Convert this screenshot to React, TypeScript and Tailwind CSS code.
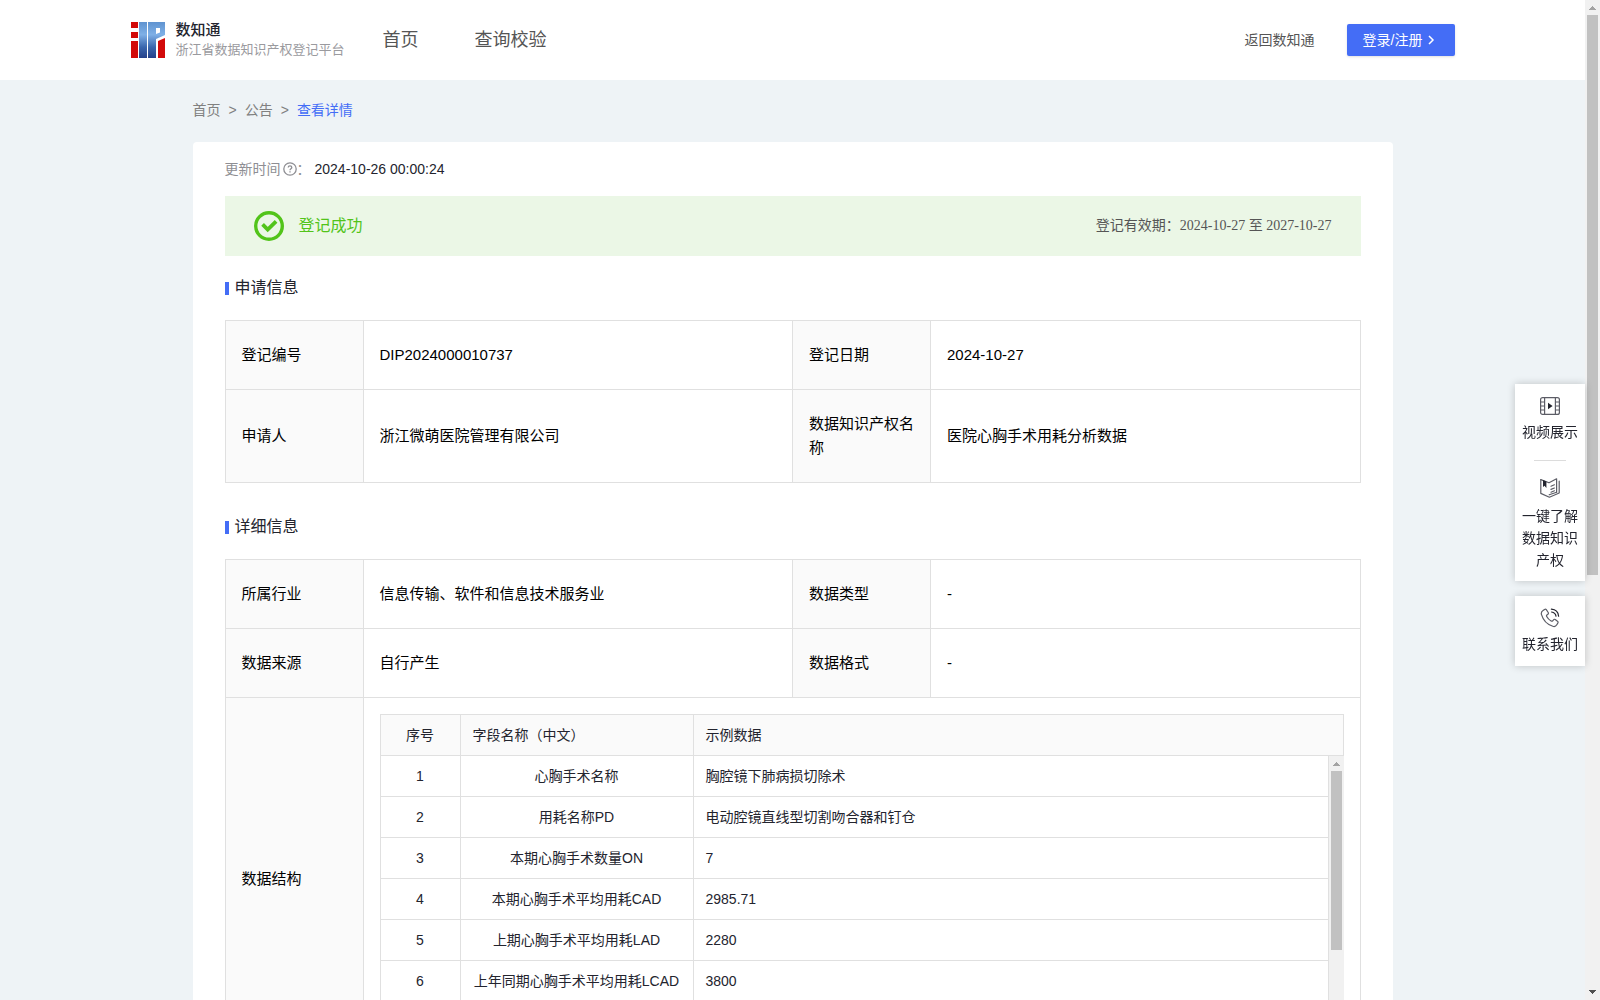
import React from 'react';

interface InfoRow {
  label: string;
  value: string;
}

const applyRows: InfoRow[][] = [
  [{ label: '登记编号', value: 'DIP2024000010737' }, { label: '登记日期', value: '2024-10-27' }],
  [{ label: '申请人', value: '浙江微萌医院管理有限公司' }, { label: '数据知识产权名称', value: '医院心胸手术用耗分析数据' }],
];

const detailRows: InfoRow[][] = [
  [{ label: '所属行业', value: '信息传输、软件和信息技术服务业' }, { label: '数据类型', value: '-' }],
  [{ label: '数据来源', value: '自行产生' }, { label: '数据格式', value: '-' }],
];

const fields = [
  { id: 1, name: '心胸手术名称', sample: '胸腔镜下肺病损切除术' },
  { id: 2, name: '用耗名称PD', sample: '电动腔镜直线型切割吻合器和钉仓' },
  { id: 3, name: '本期心胸手术数量ON', sample: '7' },
  { id: 4, name: '本期心胸手术平均用耗CAD', sample: '2985.71' },
  { id: 5, name: '上期心胸手术平均用耗LAD', sample: '2280' },
  { id: 6, name: '上年同期心胸手术平均用耗LCAD', sample: '3800' },
];

const Logo = () => (
  <svg width="34" height="36" viewBox="0 0 34 36">
    <defs>
      <linearGradient id="logoBlue" x1="0" y1="0" x2="0" y2="36" gradientUnits="userSpaceOnUse">
        <stop offset="0" stopColor="#5f93d0" />
        <stop offset="0.35" stopColor="#7fb0e6" />
        <stop offset="0.7" stopColor="#3a66ad" />
        <stop offset="1" stopColor="#24408a" />
      </linearGradient>
    </defs>
    <path fill="#d20a0a" d="M0 0h7v6H0zM0 10h7v6H0zM0 19h7v17H0zM27 19l7-3v20h-7z" />
    <path fill="url(#logoBlue)" d="M8 0h8v36H8z" />
    <path fill="url(#logoBlue)" fillRule="evenodd" d="M17 0h17v13l-9 4v19h-8zM25 6v6l4-1.500V6z" />
  </svg>
);

const VideoIcon = () => (
  <svg width="20" height="20" viewBox="0 0 20 20" fill="none" stroke="#5c5d66" strokeWidth="1.2">
    <rect x="0.6" y="1.6" width="18.8" height="16.8" rx="2" />
    <path d="M4.6 1.6v16.8M15.4 1.6v16.8M0.6 6h4M0.6 10h4M0.6 14h4M15.4 6h4M15.4 10h4M15.4 14h4" />
    <path d="M8 6.8v6.4l4.6-3.2z" fill="#23242e" stroke="none" />
  </svg>
);

const BookIcon = () => (
  <svg width="20" height="20" viewBox="0 0 20 20" fill="none" stroke="#5c5d66" strokeWidth="1.2" strokeLinejoin="round" strokeLinecap="round">
    <path d="M0.8 1.6 9 4.8l7.6-4v13.4" />
    <path d="M0.8 1.6v13.8l8.600 3.800 9.800-4.200V3.200" />
    <path d="M9.200 16.800l7.400-2.600" />
    <path d="M11 8.200l3.400-1.400M11 11.400l3.400-1.400M11 14.200l3.400-1.400" />
    <path d="M3 2v7l1.500-1.200L6.400 10V3.600z" fill="#23242e" stroke="none" />
  </svg>
);

const PhoneIcon = () => (
  <svg width="20" height="20" viewBox="0 0 20 20" fill="none" stroke="#5c5d66" strokeWidth="1.2" strokeLinecap="round" strokeLinejoin="round">
    <path d="M3 2.6 4.6 1.4c.6-.4 1.3-.3 1.7.3l1.9 2.8c.4.6.3 1.3-.3 1.7l-1 .8c-.5.4-.5 1-.2 1.6 1 1.9 2.500 3.400 4.400 4.400.6.3 1.200.3 1.600-.2l.8-1c.4-.6 1.100-.7 1.700-.3l2.300 1.800c.6.4.8 1.200.3 1.800l-1 1.700c-.8 1.400-2.400 2-4 1.500C7.500 16.700 3.200 12.400 1.500 6.700 1 5.100 1.600 3.500 3 2.600z" />
    <path d="M11.400 1.200c4 .3 6.800 3 7.200 7M11.600 4c2.500.3 4 1.800 4.400 4.200" stroke="#23242e" />
  </svg>
);

const SuccessIcon = () => (
  <svg width="30" height="30" viewBox="0 0 30 30" fill="none" stroke="#52c41a">
    <circle cx="15" cy="15" r="13.3" strokeWidth="3.4" />
    <path d="M8.600 13.400l5.100 5.100 8.400-8.200" strokeWidth="3.800" />
  </svg>
);

const HelpIcon = () => (
  <svg width="14" height="14" viewBox="0 0 14 14" fill="none" stroke="#8e8e93" strokeWidth="1.3">
    <circle cx="7" cy="7" r="6.2" />
    <path d="M5.200 5.600c0-1 .8-1.700 1.800-1.700s1.800.7 1.800 1.600c0 1.200-1.800 1.300-1.800 2.700" />
    <path d="M7 9.200v1.300" />
  </svg>
);

// Scroll track with arrows, the thumb length comes from the caller
const ScrollTrack = ({ thumb, downArrow }: { thumb: string; downArrow?: boolean }) => (
  <div className="w-[15px] shrink-0 bg-[#f1f1f1] flex flex-col items-center" aria-hidden="true">
    <svg className="shrink-0" width="15" height="15" viewBox="0 0 15 15" fill="#a3a3a3" shapeRendering="crispEdges">
      <path d="M4 10h7L7.500 6z" />
    </svg>
    <div className={`w-[11px] bg-[#c1c1c1] ${thumb}`}></div>
    {downArrow && (
      <svg className="shrink-0 mt-auto" width="15" height="15" viewBox="0 0 15 15" fill="#505050" shapeRendering="crispEdges">
        <path d="M4 5h7L7.500 9z" />
      </svg>
    )}
  </div>
);

const SectionTitle = ({ children }: { children: React.ReactNode }) => (
  <h2 className="flex items-center gap-1.5 text-base leading-6 text-[#23242e]">
    <span className="w-1 h-[13px] bg-[#446df6]"></span>
    {children}
  </h2>
);

const InfoTable = ({ rows, children }: { rows: InfoRow[][]; children?: React.ReactNode }) => (
  <table className="w-full table-fixed border-collapse text-[15px] leading-6 text-black">
    <colgroup>
      <col className="w-[138px]" />
      <col />
      <col className="w-[138px]" />
      <col />
    </colgroup>
    <tbody>
      {rows.map((row) => (
        <tr key={row[0].label}>
          {row.map((cell) => (
            <React.Fragment key={cell.label}>
              <th scope="row" className="border border-[#e0e0e0] bg-[#fafafa] px-4 py-[22px] text-left font-normal">{cell.label}</th>
              <td className="border border-[#e0e0e0] px-4 py-[22px]">{cell.value}</td>
            </React.Fragment>
          ))}
        </tr>
      ))}
      {children}
    </tbody>
  </table>
);

const FieldCols = () => (
  <colgroup>
    <col className="w-20" />
    <col className="w-[233px]" />
    <col />
  </colgroup>
);

const FieldTable = () => (
  <div className="border-l border-t border-[#e0e0e0] text-sm leading-6 text-[#23242e]">
    <table className="w-full table-fixed border-separate border-spacing-0 bg-[#fafafa]">
      <FieldCols />
      <thead>
        <tr>
          <th className="border-r border-b border-[#e0e0e0] px-3 py-2 font-normal">序号</th>
          <th className="border-r border-b border-[#e0e0e0] px-3 py-2 text-left font-normal">字段名称（中文）</th>
          <th className="border-r border-b border-[#e0e0e0] px-3 py-2 text-left font-normal">示例数据</th>
        </tr>
      </thead>
    </table>
    <div className="flex h-[287px] overflow-hidden">
      <div className="flex-1 border-r border-[#e0e0e0]">
        <table className="w-full table-fixed border-separate border-spacing-0">
          <FieldCols />
          <tbody>
            {fields.map((f) => (
              <tr key={f.id}>
                <td className="border-r border-b border-[#e0e0e0] px-3 py-2 text-center">{f.id}</td>
                <td className="border-r border-b border-[#e0e0e0] px-3 py-2 text-center">{f.name}</td>
                <td className="border-b border-[#e0e0e0] px-3 py-2">{f.sample}</td>
              </tr>
            ))}
          </tbody>
        </table>
      </div>
      <ScrollTrack thumb="h-[179px]" />
    </div>
  </div>
);

const Header = () => (
  <header className="h-20 bg-white">
    <div className="mx-auto flex h-full max-w-[1324px] items-center">
      <a href="#" className="flex items-center gap-[11px]">
        <Logo />
        <span className="flex flex-col">
          <span className="text-[15px] leading-5 font-medium text-[#23242e]">数知通</span>
          <span className="text-[13px] leading-5 text-[#9a9a9e]">浙江省数据知识产权登记平台</span>
        </span>
      </a>
      <nav className="ml-[38px] flex gap-14 text-lg text-[#555555]">
        <a href="#">首页</a>
        <a href="#">查询校验</a>
      </nav>
      <a href="#" className="ml-auto text-sm text-[#555555]">返回数知通</a>
      <button className="ml-8 flex h-8 w-[108px] items-center gap-1 rounded-[2px] bg-[#446df6] pl-4 text-sm text-white shadow-sm">
        登录/注册
        <svg width="10" height="10" viewBox="0 0 10 10" fill="none" stroke="currentColor" strokeWidth="1.5">
          <path d="M3 1l4 4-4 4" />
        </svg>
      </button>
    </div>
  </header>
);

const SideBar = () => (
  <aside className="fixed right-[15px] top-96 z-10 flex w-[70px] flex-col gap-[15px] text-sm leading-[22px] text-[#23242e]">
    <div className="flex flex-col items-center bg-white pt-3 pb-2.5 shadow-[0_0_8px_rgba(0,0,0,0.2)]">
      <a href="#" className="flex flex-col items-center gap-[5px]">
        <VideoIcon />
        视频展示
      </a>
      <div className="my-[17px] h-px w-8 bg-[#dcdcdc]"></div>
      <a href="#" className="flex flex-col items-center gap-[7px] px-[7px] text-center">
        <BookIcon />
        一键了解数据知识产权
      </a>
    </div>
    <a href="#" className="flex flex-col items-center gap-[5px] bg-white pt-3 pb-[11px] shadow-[0_0_8px_rgba(0,0,0,0.2)]">
      <PhoneIcon />
      联系我们
    </a>
  </aside>
);

export default function App() {
  return (
    <div className="flex h-screen bg-[#eef3f6] font-['Liberation_Sans','Noto_Sans_CJK_SC',sans-serif]">
      <div className="min-w-0 flex-1 overflow-y-auto [scrollbar-width:none]">
        <Header />
        <main className="mx-auto max-w-[1200px]">
          <nav className="flex gap-2 pt-5 pb-[22px] text-sm text-[#808080]">
            <a href="#">首页</a>
            <span>&gt;</span>
            <a href="#">公告</a>
            <span>&gt;</span>
            <a href="#" className="text-[#446df6]">查看详情</a>
          </nav>

          <div className="rounded-t bg-white px-8 pt-[15px] pb-8">
            <p className="flex items-center text-sm leading-6 text-[#8e8e93]">
              更新时间
              <span className="pl-0.5"><HelpIcon /></span>
              ：
              <span className="ml-1 text-[#23242e]">2024-10-26 00:00:24</span>
            </p>

            <div className="mt-[15px] flex h-[60px] items-center bg-[#ebf7e6] px-[29px]">
              <SuccessIcon />
              <span className="ml-[15px] text-base text-[#52c41a]">登记成功</span>
              <span className="ml-auto font-['Liberation_Serif','Noto_Sans_CJK_SC',serif] text-sm text-[#555555]">
                登记有效期：2024-10-27 至 2027-10-27
              </span>
            </div>

            <section className="mt-5">
              <SectionTitle>申请信息</SectionTitle>
              <div className="mt-5">
                <InfoTable rows={applyRows} />
              </div>
            </section>

            <section className="mt-8">
              <SectionTitle>详细信息</SectionTitle>
              <div className="mt-5">
                <InfoTable rows={detailRows}>
                  <tr>
                    <th scope="row" className="border border-[#e0e0e0] bg-[#fafafa] px-4 text-left font-normal">数据结构</th>
                    <td colSpan={3} className="border border-[#e0e0e0] p-4">
                      <FieldTable />
                    </td>
                  </tr>
                </InfoTable>
              </div>
            </section>
          </div>
        </main>
      </div>
      <SideBar />
      <ScrollTrack thumb="h-[560px]" downArrow />
    </div>
  );
}
